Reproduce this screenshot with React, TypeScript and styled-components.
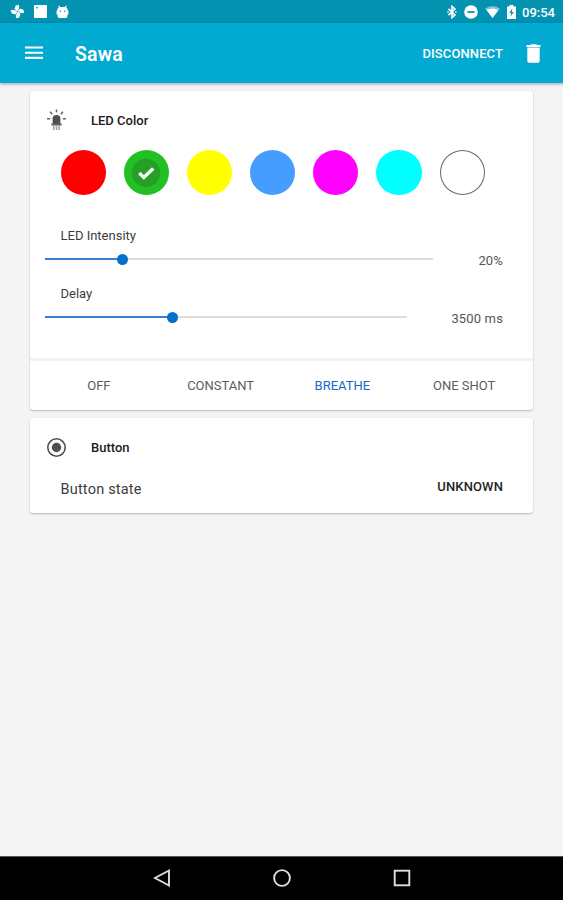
import React from 'react';
import styled, { createGlobalStyle } from 'styled-components';

const GlobalStyle = createGlobalStyle`
  *, *::before, *::after { box-sizing: border-box; }
  body { margin: 0; background: #f4f4f4; }
  button { font: inherit; color: inherit; border: 0; background: none; padding: 0; }
  svg { display: block; flex: none; }
`;

const Screen = styled.div`
  width: 563px;
  height: 900px;
  display: flex;
  flex-direction: column;
  overflow: hidden;
  background: #f4f4f4;
  font-family: Roboto, sans-serif;
  color: #3c3c3c;
`;

const StatusBar = styled.div`
  height: 23px;
  flex: none;
  display: flex;
  justify-content: space-between;
  padding: 0 8px 0 10px;
  background: #0392b0;
  color: #fff;
`;

const StatusGroup = styled.div<{ $gap: number }>`
  display: flex;
  align-items: center;
  gap: ${(p) => p.$gap}px;
`;

const Clock = styled.span`
  font-size: 13px;
  font-weight: 500;
  line-height: 22px;
  padding-top: 2px;
  margin-left: -1px;
`;

const Toolbar = styled.header`
  height: 60px;
  flex: none;
  display: flex;
  align-items: center;
  padding: 0 22.5px 0 25px;
  background: #02a9d0;
  color: #fff;
  box-shadow: 0 1px 3px rgba(0, 0, 0, 0.35);
`;

const Title = styled.h1`
  flex: 1;
  margin: 2px 0 0 32px;
  font-size: 19.5px;
  font-weight: 600;
  letter-spacing: 0.2px;
`;

const ToolbarAction = styled.button`
  font-size: 13px;
  font-weight: 500;
  letter-spacing: 0.1px;
  margin-right: 22.5px;
`;

const IconButton = styled.button`
  display: flex;
`;

const Content = styled.main`
  flex: 1;
  display: flex;
  flex-direction: column;
  gap: 8px;
  padding: 8px 30px 0;
`;

const Card = styled.section<{ $height: number }>`
  height: ${(p) => p.$height}px;
  display: flex;
  flex-direction: column;
  background: #fff;
  border-radius: 3px;
  box-shadow: 0 1px 2px rgba(0, 0, 0, 0.24), 0 0 1px rgba(0, 0, 0, 0.08);
`;

const CardHeader = styled.div`
  height: 59px;
  flex: none;
  display: flex;
  align-items: center;
  gap: 24px;
  padding-left: 16px;
`;

const CardTitle = styled.h2`
  margin: 0;
  line-height: 16px;
  font-size: 13px;
  font-weight: 500;
  color: #1c1c1c;
`;

const Swatches = styled.div`
  display: flex;
  gap: 18px;
  height: 45px;
  margin-left: 30.5px;
  align-items: center;
`;

const Swatch = styled.button<{ $color: string; $outlined?: boolean }>`
  width: 45.2px;
  height: 45px;
  border-radius: 50%;
  background: ${(p) => p.$color};
  border: ${(p) => (p.$outlined ? '1px solid #6a6a6a' : '0')};
  display: flex;
  align-items: center;
  justify-content: center;
`;

const SliderBlock = styled.div<{ $top: number }>`
  margin-top: ${(p) => p.$top}px;
  height: 43px;
`;

const SliderLabel = styled.div`
  margin-left: 30.5px;
  font-size: 13px;
  line-height: 18px;
`;

const SliderRow = styled.div`
  display: flex;
  align-items: center;
  justify-content: space-between;
  height: 16px;
  margin-top: 6px;
  padding: 0 30px 0 15px;
`;

const Track = styled.div<{ $width: number; $fill: number }>`
  display: flex;
  align-items: center;
  width: ${(p) => p.$width}px;
  height: 2px;
  background: linear-gradient(to right, #3d7cce ${(p) => p.$fill}px, #dedede ${(p) => p.$fill}px);
`;

const Thumb = styled.span<{ $at: number }>`
  width: 11px;
  height: 11px;
  margin-left: ${(p) => p.$at - 5.5}px;
  border-radius: 50%;
  background: #0570ca;
`;

const Value = styled.span`
  font-size: 13px;
  line-height: 16px;
  padding-top: 3px;
  letter-spacing: 0.15px;
  color: #555;
`;

const Modes = styled.div`
  margin-top: auto;
  height: 52px;
  display: flex;
  border-top: 3px solid #f2f2f2;
  padding: 0 8px;
`;

const Mode = styled.button<{ $active?: boolean }>`
  flex: 1;
  font-size: 13px;
  padding-bottom: 1px;
  color: ${(p) => (p.$active ? '#1a66c2' : '#5c5c5c')};
`;

const StateRow = styled.div`
  display: flex;
  align-items: center;
  justify-content: space-between;
  padding: 0 30px 0 30.5px;
  height: 22px;
`;

const StateName = styled.span`
  font-size: 14.5px;
  letter-spacing: 0.2px;
  padding-top: 2px;
`;

const StateValue = styled.strong`
  font-size: 13px;
  font-weight: 500;
  letter-spacing: 0.12px;
  padding-bottom: 3px;
  color: #252525;
`;

const NavBar = styled.nav`
  height: 44px;
  flex: none;
  display: flex;
  align-items: center;
  justify-content: center;
  gap: 102px;
  padding-bottom: 1.5px;
  background: #000;
  border-top: 1px solid #555;
`;

const Pinwheel = () => (
  <svg width="15" height="15" viewBox="0 0 16 16" fill="#fff">
    <g transform="rotate(15 8 8)">
      {[0, 90, 180, 270].map((a) => (
        <path key={a} transform={`rotate(${a} 8 8)`} d="M8.3 8.3 4.2 6.3 4.6 2.4 7.4.6 8.6 3Z" />
      ))}
    </g>
    <circle cx="8" cy="8" r="0.8" fill="#0392b0" />
  </svg>
);

const Snapshot = () => (
  <svg width="13" height="13" viewBox="0 0 13 13">
    <rect width="13" height="13" rx="0.8" fill="#fff" />
    <circle cx="3" cy="2.6" r="0.9" fill="#0392b0" />
  </svg>
);

const Robot = () => (
  <svg width="13" height="14" viewBox="0 0 13 14">
    <path d="M2.7.8 4 3M10.3.8 9 3" stroke="#fff" strokeWidth="1.2" />
    <path d="M1.5 4.5Q1.5 2 4.500 2h4q3 0 3 2.500v1h.9v4h-.9V11q0 2-2 2h-6q-2 0-2-2V9.500H.6v-4h.9Z" fill="#fff" />
    <circle cx="4.3" cy="6.3" r="0.8" fill="#0392b0" />
    <circle cx="8.7" cy="6.3" r="0.8" fill="#0392b0" />
  </svg>
);

const Bluetooth = () => (
  <svg width="10" height="14" viewBox="0 0 10 14" fill="none" stroke="#fff" strokeWidth="1.6">
    <path d="M1.5 3.8 8 10 5 12.6V1.4L8 4 1.5 10.2" />
    <path d="M.3 7h1.4M8.2 7h1.4" />
  </svg>
);

const DoNotDisturb = () => (
  <svg width="14" height="14" viewBox="0 0 14 14">
    <circle cx="7" cy="7" r="6.8" fill="#fff" />
    <path d="M3.5 7h7" stroke="#0392b0" strokeWidth="1.8" />
  </svg>
);

const Wifi = () => (
  <svg width="15" height="12" viewBox="0 0 15 12">
    <path d="M0 2.5Q7.5-2.5 15 2.5L7.5 12Z" fill="#7cc6d6" />
    <path d="M1.7 4.1q5.8-3 11.6 0L7.5 12Z" fill="#fff" />
  </svg>
);

const Battery = () => (
  <svg width="9" height="14" viewBox="0 0 9 14">
    <path d="M2.5 0h4v1.5H9V14H0V1.5h2.5Z" fill="#fff" />
    <path d="M5.3 3.5 2.2 8h2l-.5 3.500L6.8 7h-2Z" fill="#0392b0" />
  </svg>
);

const Menu = () => (
  <svg width="18" height="14" viewBox="0 0 18 14" stroke="#fff" strokeWidth="2.1">
    <path d="M0 1.5h18M0 6.7h18M0 11.9h18" />
  </svg>
);

const Trash = () => (
  <svg width="15" height="19" viewBox="0 0 15 19" fill="#fff">
    <path d="M.5 1H4l.8-.8h5.4L11 1h3.500v2H.5ZM1.300 3.500h12.400V17q0 1.800-1.800 1.800H3.100q-1.800 0-1.800-1.800Z" />
  </svg>
);

const LedIcon = () => (
  <svg width="21" height="23" viewBox="0 0 21 23">
    <path d="M6.6 15.5V9.6q0-3.5 3.9-3.5t3.9 3.5v5.9Z" fill="#505050" />
    <path d="M5.4 14.500h10.200v2H5.4Z" fill="#606060" />
    <path d="M7.8 16.500V21M10.5 16.500V21M13.2 16.500V21" stroke="#a5a5a5" strokeWidth="1.6" />
    <path d="M10.5.5v2.7M4 2.7l2.3 2.5M17 2.7l-2.3 2.5M1 9.7h3.2M16.8 9.7H20" stroke="#666" strokeWidth="1.5" />
  </svg>
);

const RadioIcon = () => (
  <svg width="21" height="21" viewBox="0 0 21 21">
    <circle cx="10.5" cy="10.5" r="8.7" fill="none" stroke="#505050" strokeWidth="1.6" />
    <circle cx="10.5" cy="10.5" r="4.7" fill="#505050" />
  </svg>
);

const Check = () => (
  <svg width="30" height="30" viewBox="0 0 30 30">
    <circle cx="15" cy="15" r="14.2" fill="#25a025" />
    <path d="m8.3 15.1 4.500 4.300 9.400-9" fill="none" stroke="#fff" strokeWidth="3.4" />
  </svg>
);

const NavIcon = ({ children }: { children: React.ReactNode }) => (
  <svg width="18" height="20" viewBox="0 0 18 20" fill="none" stroke="#ddd" strokeWidth="1.9">
    {children}
  </svg>
);

const colors = ['#ff0000', '#22c022', '#ffff00', '#459dff', '#ff00ff', '#00ffff', '#ffffff'];
const modes = ['OFF', 'CONSTANT', 'BREATHE', 'ONE SHOT'];

const sliders = [
  { label: 'LED Intensity', value: '20%', width: 388, at: 77.5, top: 32 },
  { label: 'Delay', value: '3500 ms', width: 362, at: 127, top: 15 },
];

export default function App() {
  return (
    <Screen>
      <GlobalStyle />
      <StatusBar>
        <StatusGroup $gap={9}>
          <Pinwheel />
          <Snapshot />
          <Robot />
        </StatusGroup>
        <StatusGroup $gap={7}>
          <Bluetooth />
          <DoNotDisturb />
          <Wifi />
          <Battery />
          <Clock>09:54</Clock>
        </StatusGroup>
      </StatusBar>
      <Toolbar>
        <IconButton aria-label="Menu"><Menu /></IconButton>
        <Title>Sawa</Title>
        <ToolbarAction>DISCONNECT</ToolbarAction>
        <IconButton aria-label="Delete"><Trash /></IconButton>
      </Toolbar>
      <Content>
        <Card $height={319}>
          <CardHeader>
            <LedIcon />
            <CardTitle>LED Color</CardTitle>
          </CardHeader>
          <Swatches>
            {colors.map((c, i) => (
              <Swatch key={c} $color={c} $outlined={c === '#ffffff'} aria-label={c}>
                {i === 1 && <Check />}
              </Swatch>
            ))}
          </Swatches>
          {sliders.map((s) => (
            <SliderBlock key={s.label} $top={s.top}>
              <SliderLabel>{s.label}</SliderLabel>
              <SliderRow>
                <Track $width={s.width} $fill={s.at}><Thumb $at={s.at} /></Track>
                <Value>{s.value}</Value>
              </SliderRow>
            </SliderBlock>
          ))}
          <Modes>
            {modes.map((m) => (
              <Mode key={m} $active={m === 'BREATHE'}>{m}</Mode>
            ))}
          </Modes>
        </Card>
        <Card $height={95}>
          <CardHeader>
            <RadioIcon />
            <CardTitle>Button</CardTitle>
          </CardHeader>
          <StateRow>
            <StateName>Button state</StateName>
            <StateValue>UNKNOWN</StateValue>
          </StateRow>
        </Card>
      </Content>
      <NavBar>
        <NavIcon><path d="M16 2.5v15L2 10Z" /></NavIcon>
        <NavIcon><circle cx="9" cy="10" r="7.9" /></NavIcon>
        <NavIcon><rect x="1.7" y="2.7" width="14.6" height="14.6" /></NavIcon>
      </NavBar>
    </Screen>
  );
}
